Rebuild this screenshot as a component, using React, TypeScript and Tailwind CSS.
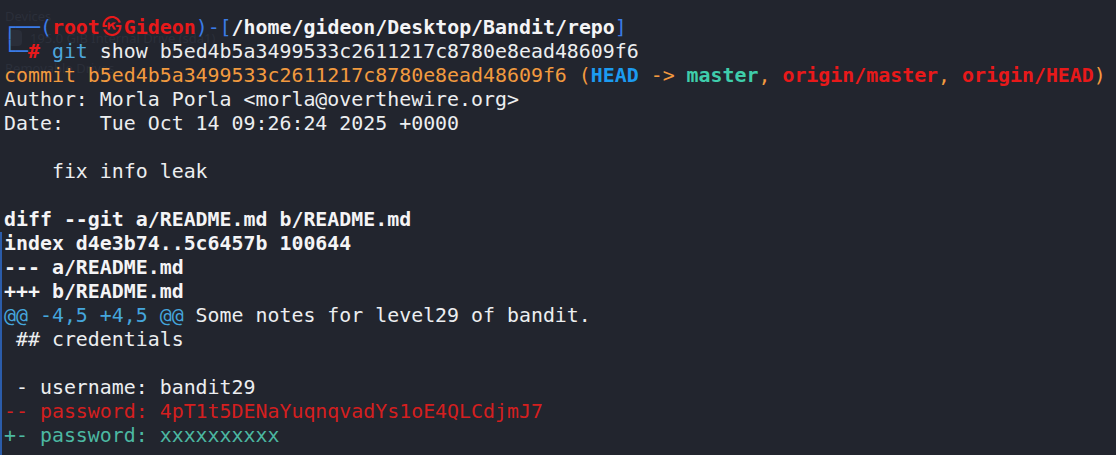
import React from 'react';

type Seg = [string, string];

const blue = 'text-[#3a7be6]';
const red = 'text-[#e8191a] font-bold';
const white = 'text-[#eceef0]';
const whiteBold = 'text-[#f4f4f6] font-bold';
const orange = 'text-[#f29a3f]';

const lines: Seg[][] = [
  [['commit b5ed4b5a3499533c2611217c8780e8ead48609f6 (', orange], ['HEAD', 'text-[#1c9bf0] font-bold'], [' -> ', orange], ['master', 'text-[#3fcdab] font-bold'], [', ', orange], ['origin/master', red], [', ', orange], ['origin/HEAD', red], [')', orange]],
  [['Author: Morla Porla <morla@overthewire.org>', white]],
  [['Date:   Tue Oct 14 09:26:24 2025 +0000', white]],
  [],
  [['    fix info leak', white]],
  [],
  [['diff --git a/README.md b/README.md', whiteBold]],
];

const diffLines: Seg[][] = [
  [['index d4e3b74..5c6457b 100644', whiteBold]],
  [['--- a/README.md', whiteBold]],
  [['+++ b/README.md', whiteBold]],
  [['@@ -4,5 +4,5 @@', 'text-[#45a6dd]'], [' Some notes for level29 of bandit.', white]],
  [[' ## credentials', white]],
  [],
  [[' - username: bandit29', white]],
  [['-- password: 4pT1t5DENaYuqnqvadYs1oE4QLCdjmJ7', 'text-[#d41f1f]']],
  [['+- password: xxxxxxxxxx', 'text-[#4cb8a2]']],
];

function Line({ segs }: { segs: Seg[] }) {
  return (
    <div className="h-6 whitespace-pre">
      {segs.map(([t, c], i) => (
        <span key={i} className={c}>{t}</span>
      ))}
    </div>
  );
}

export default function App() {
  return (
    <div
      className="relative flex h-[455px] w-[1116px] flex-col overflow-hidden bg-[#22252e] pt-4 text-[19.9px] leading-6"
      style={{ fontFamily: '"DejaVu Sans Mono", "Noto Sans CJK KR", monospace' }}
    >
      {/* faint ghost of the window behind */}
      <div className="pointer-events-none absolute left-0 top-0 text-[13px] leading-4 text-[#2b2f3a]" style={{ fontFamily: '"Noto Sans", sans-serif' }}>
        <div className="absolute left-[5px] top-[8px] whitespace-nowrap">Devices</div>
        <div className="absolute left-[8px] top-[30px] flex items-center gap-2 whitespace-nowrap">
          <span className="h-4 w-[14px] rounded-sm bg-[#2a2e39]" />
          <span>195.0 GiB Internal Drive (sda1)</span>
        </div>
        <div className="absolute left-[5px] top-[60px] whitespace-nowrap">Removable Drives</div>
      </div>

      <div className="relative pl-1">
        <div className="h-6 whitespace-pre">
          <span className={blue}>┌──(</span>
          <span className={red}>root</span>
          <span className={`inline-block w-6 text-center ${red}`}>㉿</span>
          <span className={red}>Gideon</span>
          <span className={blue}>)-[</span>
          <span className={whiteBold}>/home/gideon/Desktop/Bandit/repo</span>
          <span className={blue}>]</span>
        </div>
        <div className="h-6 whitespace-pre">
          <span className={blue}>└─</span>
          <span className={red}>#</span>
          <span> </span>
          <span className="text-[#4ea6dc]">git</span>
          <span className={white}> show b5ed4b5a3499533c2611217c8780e8ead48609f6</span>
        </div>
        {lines.map((segs, i) => (
          <Line key={i} segs={segs} />
        ))}
      </div>
      <div className="relative flex-1 pl-1 shadow-[inset_2px_0_0_#2b5caa]">
        {diffLines.map((segs, i) => (
          <Line key={i} segs={segs} />
        ))}
      </div>
    </div>
  );
}
